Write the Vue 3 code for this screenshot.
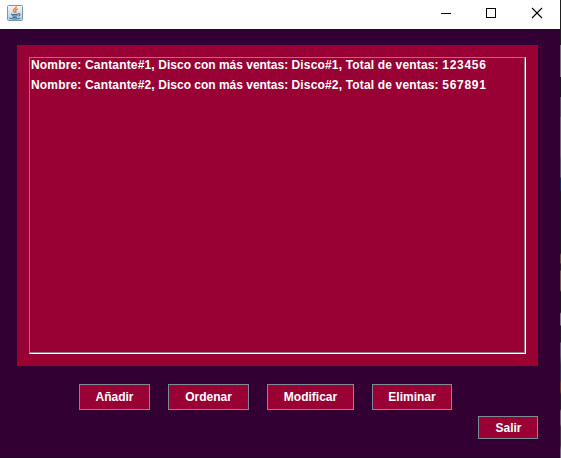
<script setup>
const artists = [
  { name: 'Cantante#1', disc: 'Disco#1', sales: 123456 },
  { name: 'Cantante#2', disc: 'Disco#2', sales: 567891 },
]
const actions = [
  { label: 'Añadir', width: 71 },
  { label: 'Ordenar', width: 81 },
  { label: 'Modificar', width: 87 },
  { label: 'Eliminar', width: 80 },
]
</script>

<template>
  <div class="screen">
    <div class="window">
      <header class="titlebar">
        <svg class="java" width="16" height="16" viewBox="0 0 16 16">
          <defs>
            <linearGradient id="tile" x1="0" y1="0" x2="0" y2="1">
              <stop offset="0" stop-color="#f4f7fa" />
              <stop offset="1" stop-color="#b9cad8" />
            </linearGradient>
          </defs>
          <rect x="0.5" y="0.5" width="15" height="15" rx="1" fill="url(#tile)" stroke="#7b96ac" />
          <path d="M9.2 1.5c.5 1.8-3.2 2.4-2.8 4.3.2.9 1.2 1.2 1.2 2.2M10.8 3.9C9 4.6 8.2 5.3 8.7 6.2c.3.6.4 1-.1 1.7" fill="none" stroke="#ee7d26" stroke-width="1.4" />
          <path d="M4 8.9c1.6.7 5.2.7 7 0M4.9 10.6c1.5.6 4.2.6 5.6 0M5.4 12.2c1.3.4 3.4.4 4.6 0M11 8.9c2.5-.7 2.6 1.6.2 2.3M3 12.6c-1.3 1.6 8.2 2 10.2.2" fill="none" stroke="#39709b" stroke-width="1.1" />
        </svg>
        <div class="controls">
          <svg width="12" height="12" viewBox="0 0 12 12"><path d="M1 6.5h10" stroke="#000" /></svg>
          <svg width="12" height="12" viewBox="0 0 12 12"><rect x="1.5" y="1.5" width="9" height="9" fill="none" stroke="#000" /></svg>
          <svg class="close" width="12" height="12" viewBox="0 0 12 12"><path d="M1 1l10 10M11 1L1 11" stroke="#000" stroke-width="1.1" /></svg>
        </div>
      </header>
      <main class="content">
        <section class="panel">
          <div class="list">
            <div v-for="a in artists" :key="a.name" class="row">Nombre: {{ a.name }}, <span class="label">Disco con más ventas: </span>{{ a.disc }}, Total de ventas: <span class="sales">{{ a.sales }}</span></div>
          </div>
        </section>
        <div class="actions">
          <button v-for="b in actions" :key="b.label" :style="{ width: b.width + 'px' }">{{ b.label }}</button>
        </div>
        <button class="exit">Salir</button>
      </main>
    </div>
    <div class="backdrop"></div>
  </div>
</template>

<style>
body { overflow: hidden; }
</style>

<style scoped>
.screen {
  display: flex;
  width: 561px;
  height: 458px;
  font-family: "Liberation Sans", Arial, sans-serif;
  font-size: 12px;
  font-weight: bold;
}
.window {
  display: flex;
  flex-direction: column;
  width: 560px;
}
.titlebar {
  box-sizing: border-box;
  display: flex;
  justify-content: space-between;
  height: 29px;
  padding: 5px 17px 0 7px;
  background: #fff;
}
.controls {
  display: flex;
  gap: 33px;
  padding-top: 2px;
}
.titlebar svg { display: block; }
.close { margin-left: 1px; }
.content {
  box-sizing: border-box;
  display: flex;
  flex-direction: column;
  flex: 1;
  padding: 16px 22px 0 17px;
  background: #330033;
  border-bottom: 1px solid #210021;
}
.panel {
  box-sizing: border-box;
  height: 321px;
  padding: 12px;
  background: #990033;
}
.list {
  box-sizing: border-box;
  height: 297px;
  border: 1px solid;
  border-color: #848284 #fff #fff #848284;
  box-shadow: inset -1px -1px 0 #848284;
}
.row {
  height: 20px;
  padding-left: 1px;
  line-height: 15px;
  color: #fff;
  letter-spacing: 0.165px;
  white-space: pre;
}
.label { letter-spacing: -0.01px; }
.sales { letter-spacing: 0.7px; }
.actions {
  display: flex;
  gap: 18px;
  padding: 18px 0 0 62px;
}
button {
  box-sizing: border-box;
  height: 26px;
  margin: 0;
  padding: 0;
  border: 1px solid #7a8a99;
  border-radius: 0;
  background: #990033;
  color: #fff;
  font: inherit;
  line-height: 24px;
}
.exit {
  align-self: flex-end;
  width: 60px;
  height: 23px;
  margin-top: 6px;
  padding: 1px 0 0 1px;
  line-height: 20px;
}
.backdrop {
  width: 1px;
  background: linear-gradient(#202020 0 45px, #77707c 45px 77px, #181820 77px 97px, #5b5365 97px 117px, #756779 117px 155px, #5b586d 160px 177px, #102f58 178px 190px, #181820 192px 253px, #62543c 255px 263px, #292026 264px 270px, #6b5a4d 271px 290px, #1b171d 292px 312px, #81758a 314px 325px, #211c27 326px 342px, #625b70 343px 355px, #35364e 365px 380px, #694126 383px 391px, #281b2a 395px 409px, #74637a 411px 424px, #443345 427px 445px, #756780 450px);
}
</style>
